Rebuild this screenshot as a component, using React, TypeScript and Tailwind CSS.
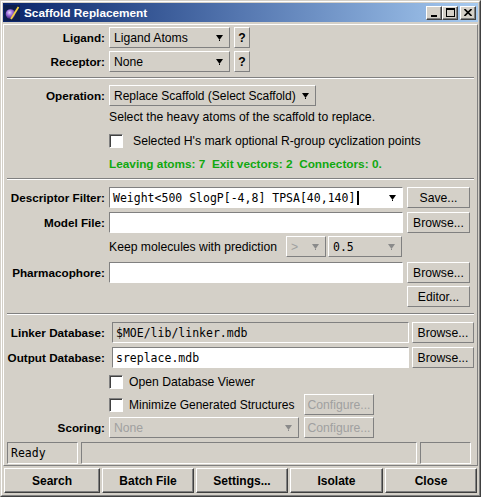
import React from "react";

const raised =
  "border border-t-white border-l-white border-r-[#808080] border-b-[#808080]";
const sunken =
  "border border-t-[#808080] border-l-[#808080] border-r-white border-b-white";
const mono = "font-['DejaVu_Sans_Mono',monospace] text-[11.5px]";

function Arrow({ grey }: { grey?: boolean }) {
  return (
    <svg width="7" height="6" viewBox="0 0 7 6" className="shrink-0">
      <polygon points="0,0 7,0 3.5,5" fill={grey ? "#8a8a8a" : "#000"} />
      <rect x="3" y="5" width="1" height="1" fill={grey ? "#8a8a8a" : "#000"} />
    </svg>
  );
}

function Select({
  value,
  className,
  disabled,
  monoText,
}: {
  value: string;
  className: string;
  disabled?: boolean;
  monoText?: boolean;
}) {
  return (
    <div
      className={`flex items-center justify-between h-full shrink-0 pl-[4px] pr-[6px] ${raised} ${className}`}
    >
      <span
        className={`whitespace-nowrap ${monoText ? mono : ""} ${disabled ? "text-[#a0a0a0]" : "text-black"}`}
      >
        {value}
      </span>
      <Arrow grey={disabled || monoText} />
    </div>
  );
}

function Button({
  children,
  className,
  disabled,
}: {
  children: React.ReactNode;
  className: string;
  disabled?: boolean;
}) {
  return (
    <div
      className={`flex items-center justify-center h-full shrink-0 ${raised} ${disabled ? "text-[#a0a0a0]" : "text-black"} ${className}`}
    >
      {children}
    </div>
  );
}

function Field({ value, className, grey }: { value?: string; className: string; grey?: boolean }) {
  return (
    <div
      className={`flex items-center h-full shrink-0 pl-[3px] ${sunken} ${grey ? "bg-[#d4d0c8]" : "bg-white"} ${className}`}
    >
      <span className={mono}>{value}</span>
    </div>
  );
}

function Check() {
  return (
    <div
      className={`w-[14px] h-[14px] shrink-0 bg-white ${sunken} shadow-[inset_1px_1px_0_#404040]`}
    />
  );
}

function Label({ children }: { children: React.ReactNode }) {
  return (
    <div className="w-[101px] shrink-0 text-right font-bold text-[11.7px]">{children}</div>
  );
}

function Sep({ mt }: { mt: string }) {
  return (
    <div
      className={`mx-[3px] h-[2px] shrink-0 border-t border-t-[#808080] border-b border-b-white ${mt}`}
    />
  );
}

function TitleBtn({ children, className }: { children: React.ReactNode; className: string }) {
  return (
    <div
      className={`w-[16px] h-[14px] bg-[#d4d0c8] border border-t-white border-l-white border-r-[#404040] border-b-[#404040] shadow-[inset_-1px_-1px_0_#808080] flex items-center justify-center ${className}`}
    >
      {children}
    </div>
  );
}

export default function App() {
  return (
    <div className="w-[481px] h-[497px] bg-[#d4d0c8] text-[12.2px] text-black font-['Liberation_Sans',Arial,sans-serif] leading-[14px] border border-t-[#d4d0c8] border-l-[#d4d0c8] border-r-[#404040] border-b-[#404040]">
      <div className="h-full border border-t-white border-l-white border-r-[#808080] border-b-[#808080] p-[1px] flex flex-col">
        {/* title bar */}
        <div className="h-[19px] shrink-0 flex items-center bg-linear-to-r from-[#0a246a] via-[#5577b0] to-[#a6caf0] pl-[1px] pr-[2px]">
          <svg width="16" height="16" viewBox="0 0 16 16" className="shrink-0">
            <rect width="16" height="16" fill="#0d1f4d" />
            <defs>
              <radialGradient id="g" cx="0.4" cy="0.35" r="0.7">
                <stop offset="0" stopColor="#e6d8ff" />
                <stop offset="0.45" stopColor="#9a6ad8" />
                <stop offset="1" stopColor="#3a1a70" />
              </radialGradient>
            </defs>
            <circle cx="6.5" cy="9" r="4.8" fill="url(#g)" />
            <line x1="7" y1="14" x2="14.5" y2="2" stroke="#f0d040" strokeWidth="1.8" />
          </svg>
          <span className="ml-[4px] text-white font-bold text-[11.8px]">Scaffold Replacement</span>
          <div className="ml-auto flex items-center">
            <TitleBtn className="">
              <svg width="8" height="8" viewBox="0 0 8 8">
                <rect x="1" y="6" width="6" height="2" fill="#000" />
              </svg>
            </TitleBtn>
            <TitleBtn className="">
              <svg width="9" height="9" viewBox="0 0 9 9">
                <rect x="0.5" y="0.5" width="8" height="8" fill="none" stroke="#000" />
                <rect x="0" y="0" width="9" height="2" fill="#000" />
              </svg>
            </TitleBtn>
            <TitleBtn className="ml-[2px]">
              <svg width="8" height="7" viewBox="0 0 8 7">
                <path d="M0.5 0 L7.5 7 M7.5 0 L0.5 7" stroke="#000" strokeWidth="1.6" />
              </svg>
            </TitleBtn>
          </div>
        </div>

        {/* main panel */}
        <div className={`mt-[2px] h-[442px] shrink-0 ${raised} flex flex-col`}>
          <div className="flex items-center h-[21px] shrink-0 gap-[4px] mt-[2px]">
            <Label>Ligand:</Label>
            <Select value="Ligand Atoms" className="w-[121px]" />
            <Button className="w-[16px] font-bold">?</Button>
          </div>
          <div className="flex items-center h-[21px] shrink-0 gap-[4px] mt-[3px]">
            <Label>Receptor:</Label>
            <Select value="None" className="w-[121px]" />
            <Button className="w-[16px] font-bold">?</Button>
          </div>

          <Sep mt="mt-[5px]" />

          <div className="flex items-center h-[21px] shrink-0 gap-[4px] mt-[6px]">
            <Label>Operation:</Label>
            <Select value="Replace Scaffold (Select Scaffold)" className="w-[207px] text-[12px]" />
          </div>
          <div className="pl-[105px] h-[14px] shrink-0 mt-[4px]">
            Select the heavy atoms of the scaffold to replace.
          </div>
          <div className="pl-[105px] h-[14px] shrink-0 mt-[10px] flex items-center">
            <Check />
            <span className="ml-[10px]">Selected H's mark optional R-group cyclization points</span>
          </div>
          <div className="pl-[105px] h-[14px] shrink-0 mt-[9px] font-bold text-[11.8px] text-[#10a810] whitespace-pre">
            {"Leaving atoms: 7  Exit vectors: 2  Connectors: 0."}
          </div>

          <Sep mt="mt-[7px]" />

          <div className="flex items-center h-[21px] shrink-0 gap-[4px] mt-[7px]">
            <Label>Descriptor Filter:</Label>
            <div
              className={`flex items-center justify-between h-full shrink-0 w-[294px] pl-[3px] pr-[6px] bg-white ${sunken}`}
            >
              <span className={`${mono} flex items-center`}>
                Weight&lt;500 SlogP[-4,8] TPSA[40,140]
                <span className="inline-block w-[2px] h-[14px] bg-black ml-[2px]" />
              </span>
              <Arrow />
            </div>
            <Button className="w-[63px]">Save...</Button>
          </div>
          <div className="flex items-center h-[21px] shrink-0 gap-[4px] mt-[4px]">
            <Label>Model File:</Label>
            <Field className="w-[294px]" />
            <Button className="w-[63px]">Browse...</Button>
          </div>
          <div className="flex items-center h-[21px] shrink-0 mt-[3px] pl-[105px]">
            <span className="w-[177px] shrink-0">Keep molecules with prediction</span>
            <Select value=">" className="w-[40px]" disabled />
            <Select value="0.5" className="w-[74px] ml-[2px]" monoText />
          </div>
          <div className="flex items-center h-[21px] shrink-0 gap-[4px] mt-[5px]">
            <Label>Pharmacophore:</Label>
            <Field className="w-[294px]" />
            <Button className="w-[63px]">Browse...</Button>
          </div>
          <div className="flex items-center h-[21px] shrink-0 mt-[3px] pl-[403px]">
            <Button className="w-[63px]">Editor...</Button>
          </div>

          <Sep mt="mt-[6px]" />

          <div className="flex items-center h-[21px] shrink-0 gap-[3px] mt-[7px]">
            <Label>Linker Database:</Label>
            <div className="w-[1px]" />
            <Field className="w-[297px]" value="$MOE/lib/linker.mdb" grey />
            <Button className="w-[62px]">Browse...</Button>
          </div>
          <div className="flex items-center h-[21px] shrink-0 gap-[3px] mt-[4px]">
            <Label>Output Database:</Label>
            <div className="w-[1px]" />
            <Field className="w-[297px]" value="sreplace.mdb" />
            <Button className="w-[62px]">Browse...</Button>
          </div>
          <div className="pl-[105px] h-[14px] shrink-0 mt-[7px] flex items-center">
            <Check />
            <span className="ml-[6px]">Open Database Viewer</span>
          </div>
          <div className="pl-[105px] h-[21px] shrink-0 mt-[5px] flex items-center">
            <Check />
            <span className="ml-[6px] w-[169px] shrink-0 whitespace-nowrap text-[12px]">
              Minimize Generated Structures
            </span>
            <Button className="w-[70px] ml-[6px]" disabled>
              Configure...
            </Button>
          </div>
          <div className="flex items-center h-[21px] shrink-0 gap-[4px] mt-[2px]">
            <Label>Scoring:</Label>
            <Select value="None" className="w-[190px]" disabled />
            <Button className="w-[70px] ml-[1px]" disabled>
              Configure...
            </Button>
          </div>

          <div className="flex items-center h-[22px] shrink-0 gap-[3px] mt-[4px] pl-[3px]">
            <div className={`h-full w-[71px] flex items-center pl-[3px] ${sunken}`}>
              <span className={mono}>Ready</span>
            </div>
            <div className={`h-full w-[336px] ${sunken}`} />
            <div className={`h-full w-[51px] ${sunken}`} />
          </div>
        </div>

        {/* bottom buttons */}
        <div className="flex h-[25px] shrink-0 gap-[2px] mt-[2px] ml-[1px] font-bold text-[12px]">
          {[
            ["Search", "w-[96px]"],
            ["Batch File", "w-[92px]"],
            ["Settings...", "w-[92px]"],
            ["Isolate", "w-[93px]"],
            ["Close", "w-[92px]"],
          ].map(([t, w]) => (
            <div
              key={t}
              className={`${w} h-full flex items-center justify-center border border-t-white border-l-white border-r-[#404040] border-b-[#404040] shadow-[inset_-1px_-1px_0_#808080]`}
            >
              {t}
            </div>
          ))}
        </div>
      </div>
    </div>
  );
}
